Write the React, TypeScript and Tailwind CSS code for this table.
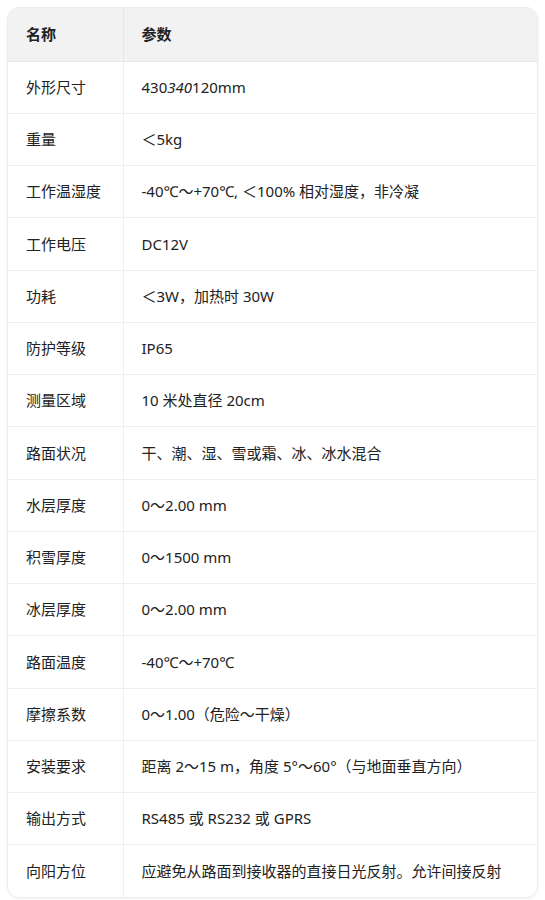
import React from "react";

const rows: [string, React.ReactNode][] = [
  [
    "外形尺寸",
    <>
      430<em className="italic">340</em>120mm
    </>,
  ],
  ["重量", "＜5kg"],
  ["工作温湿度", "-40℃～+70℃, ＜100% 相对湿度，非冷凝"],
  ["工作电压", "DC12V"],
  ["功耗", "＜3W，加热时 30W"],
  ["防护等级", "IP65"],
  ["测量区域", "10 米处直径 20cm"],
  ["路面状况", "干、潮、湿、雪或霜、冰、冰水混合"],
  ["水层厚度", "0～2.00 mm"],
  ["积雪厚度", "0～1500 mm"],
  ["冰层厚度", "0～2.00 mm"],
  ["路面温度", "-40℃～+70℃"],
  ["摩擦系数", "0～1.00（危险～干燥）"],
  ["安装要求", "距离 2～15 m，角度 5°～60°（与地面垂直方向）"],
  ["输出方式", "RS485 或 RS232 或 GPRS"],
  ["向阳方位", "应避免从路面到接收器的直接日光反射。允许间接反射"],
];

export default function App() {
  return (
    <div
      className="min-h-[900px] bg-white p-[7px] text-[15px] text-[#222]"
      style={{ fontFamily: '"Noto Sans", "Noto Sans CJK SC", sans-serif' }}
    >
      <div className="overflow-hidden rounded-xl border border-[#ececec] shadow-[0_1px_3px_rgba(0,0,0,0.06)]">
        <table className="w-full border-collapse">
          <thead>
            <tr className="h-[53px] bg-[#f2f2f2]">
              <th className="w-[115px] border-r border-b border-[#e8e8e8] pl-[18px] text-left font-bold">
                名称
              </th>
              <th className="border-b border-[#e8e8e8] pl-[18px] text-left font-bold">
                参数
              </th>
            </tr>
          </thead>
          <tbody>
            {rows.map(([name, value], i) => (
              <tr
                key={name}
                className={
                  i === rows.length - 1
                    ? "h-[52.25px]"
                    : "h-[52.25px] border-b border-[#efefef]"
                }
              >
                <td className="border-r border-[#efefef] pl-[18px] whitespace-nowrap">
                  {name}
                </td>
                <td className="pl-[18px] whitespace-nowrap">{value}</td>
              </tr>
            ))}
          </tbody>
        </table>
      </div>
    </div>
  );
}
